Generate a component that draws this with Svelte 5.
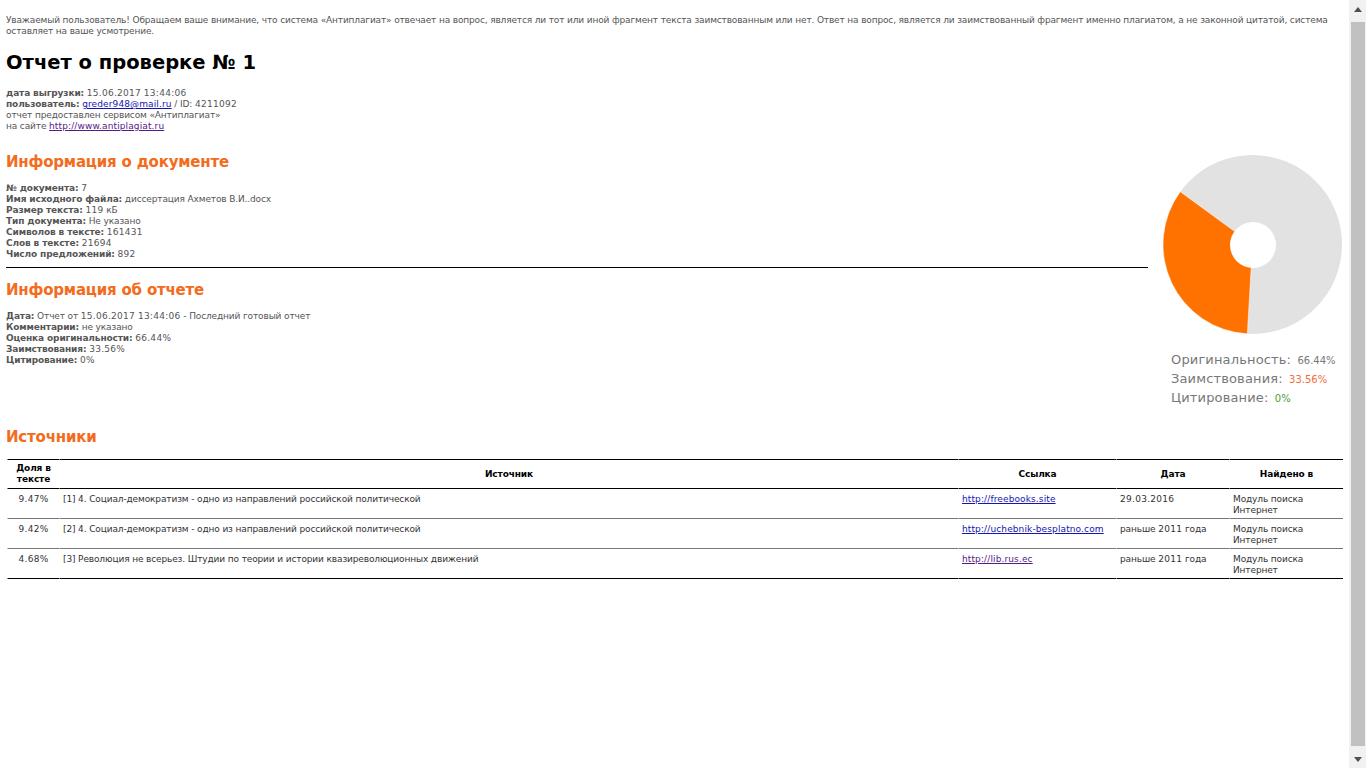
<script>
  const docInfo = [
    ["№ документа:", "7"],
    ["Имя исходного файла:", "диссертация Ахметов В.И..docx"],
    ["Размер текста:", "119 кБ"],
    ["Тип документа:", "Не указано"],
    ["Символов в тексте:", "161431"],
    ["Слов в тексте:", "21694"],
    ["Число предложений:", "892"],
  ];
  const reportInfo = [
    ["Дата:", "Отчет от 15.06.2017 13:44:06 - Последний готовый отчет"],
    ["Комментарии:", "не указано"],
    ["Оценка оригинальности:", "66.44%"],
    ["Заимствования:", "33.56%"],
    ["Цитирование:", "0%"],
  ];
  const sources = [
    { share: "9.47%", title: "[1] 4. Социал-демократизм - одно из направлений российской политической", url: "http://freebooks.site", date: "29.03.2016" },
    { share: "9.42%", title: "[2] 4. Социал-демократизм - одно из направлений российской политической", url: "http://uchebnik-besplatno.com", date: "раньше 2011 года" },
    { share: "4.68%", title: "[3] Революция не всерьез. Штудии по теории и истории квазиреволюционных движений", url: "http://lib.rus.ec", date: "раньше 2011 года", visited: true },
  ];

  // digits sit wider than letters in the report's font
  const runs = (text) => text.split(/(\d[\d.:%]*)/);

  // orange slice, angles measured clockwise from 12 o'clock
  const r = 89.5;
  const point = (deg) => {
    const a = (deg * Math.PI) / 180;
    return `${(r + r * Math.sin(a)).toFixed(2)} ${(r - r * Math.cos(a)).toFixed(2)}`;
  };
  const slice = `M${r} ${r} L${point(183.3)} A${r} ${r} 0 0 1 ${point(306.2)} Z`;
</script>

{#snippet val(text)}{#each runs(text) as part, i}{#if i % 2}<span class="num">{part}</span>{:else}{part}{/if}{/each}{/snippet}

<div class="page">
  <main>
    <p class="notice">Уважаемый пользователь! Обращаем ваше внимание, что система «Антиплагиат» отвечает на вопрос, является ли тот или иной фрагмент текста заимствованным или нет. Ответ на вопрос, является ли заимствованный фрагмент именно плагиатом, а не законной цитатой, система оставляет на ваше усмотрение.</p>
    <h1>Отчет о проверке № 1</h1>
    <div class="meta">
      <div><b>дата выгрузки:</b> {@render val("15.06.2017 13:44:06")}</div>
      <div><b>пользователь:</b> <a href="#top">greder948@mail.ru</a> / ID: {@render val("4211092")}</div>
      <div>отчет предоставлен сервисом «Антиплагиат»</div>
      <div>на сайте <a class="visited" href="#top">http://www.antiplagiat.ru</a></div>
    </div>

    <div class="info">
      <div class="info-text">
        <h2>Информация о документе</h2>
        <div class="rows">
          {#each docInfo as [label, value]}
            <div><b>{label}</b> {@render val(value)}</div>
          {/each}
        </div>
        <hr />
        <h2>Информация об отчете</h2>
        <div class="rows">
          {#each reportInfo as [label, value]}
            <div><b>{label}</b> {@render val(value)}</div>
          {/each}
        </div>
      </div>
      <aside>
        <svg width="180" height="180" viewBox="0 0 180 180">
          <circle cx={r} cy={r} r={r} fill="#e2e2e2" />
          <path d={slice} fill="#ff7200" stroke="#fff" stroke-width="0.5" />
          <circle cx="90" cy="90" r="23" fill="#fff" />
        </svg>
        <div class="legend">
          <div>Оригинальность: <span>66.44%</span></div>
          <div>Заимствования: <span class="borrowed">33.56%</span></div>
          <div>Цитирование: <span class="cited">0%</span></div>
        </div>
      </aside>
    </div>

    <h2 class="sources-title">Источники</h2>
    <table>
      <thead>
        <tr>
          <th class="c-share">Доля в тексте</th>
          <th>Источник</th>
          <th class="c-link">Ссылка</th>
          <th class="c-date">Дата</th>
          <th class="c-found">Найдено в</th>
        </tr>
      </thead>
      <tbody>
        {#each sources as s}
          <tr>
            <td class="share">{@render val(s.share)}</td>
            <td>{s.title}</td>
            <td><a class:visited={s.visited} href="#top">{s.url}</a></td>
            <td>{@render val(s.date)}</td>
            <td>Модуль поиска Интернет</td>
          </tr>
        {/each}
      </tbody>
    </table>
  </main>

  <div class="scrollbar">
    <span class="arrow up"></span>
    <span class="thumb"></span>
    <span class="arrow down"></span>
  </div>
</div>

<style>
  :global(body) {
    background: #fff;
  }

  .page {
    display: flex;
    height: 768px;
    overflow: hidden;
    font: 9px/11px "DejaVu Sans", Verdana, sans-serif;
    letter-spacing: -0.13px;
    color: #555;
  }

  .num {
    letter-spacing: 0.28px;
  }

  main {
    flex: 1;
    min-width: 0;
    padding: 15px 6px 0;
  }

  .notice {
    margin: 0;
    letter-spacing: -0.145px;
  }

  h1 {
    margin: 13px 0 0;
    font-size: 19.5px;
    line-height: 26px;
    letter-spacing: 0;
    color: #000;
  }

  .meta {
    margin-top: 12px;
  }

  a {
    color: #1414b0;
    letter-spacing: 0.12px;
  }

  a.visited {
    color: #551a8b;
  }

  .info {
    display: flex;
    margin-top: 14px;
  }

  .info-text {
    flex: 1;
    padding-top: 7px;
  }

  h2 {
    margin: 0;
    font-size: 15px;
    line-height: 18px;
    letter-spacing: -0.2px;
    color: #f26c1c;
  }

  .rows {
    margin-top: 12px;
  }

  hr {
    height: 1px;
    margin: 7px 0 13px;
    border: 0;
    background: #000;
  }

  aside {
    width: 195px;
    flex: none;
    padding-top: 9px;
    padding-left: 15px;
    box-sizing: border-box;
  }

  svg {
    display: block;
  }

  .legend {
    margin: 15px 0 0 8px;
    font-size: 13px;
    line-height: 19px;
    letter-spacing: 0.15px;
    color: #777;
    white-space: nowrap;
  }

  .legend span {
    margin-left: 2px;
    font-size: 10px;
    line-height: 1;
    letter-spacing: 0;
  }

  .legend .borrowed {
    color: #f26c3c;
  }

  .legend .cited {
    color: #4f9a3a;
  }

  .sources-title {
    margin-top: 21px;
  }

  table {
    width: 1336px;
    margin: 13px 0 0 1px;
    border-collapse: separate;
    border-spacing: 0;
    table-layout: fixed;
    color: #333;
  }

  th {
    height: 28px;
    padding: 0 1px;
    border-top: 1px solid #000;
    border-bottom: 1px solid #000;
    border-left: 1px solid #fff;
    color: #000;
    text-align: center;
    vertical-align: middle;
    font-weight: bold;
  }

  .c-share {
    width: 49px;
  }

  .c-link {
    width: 155px;
  }

  .c-date {
    width: 110px;
  }

  .c-found {
    width: 111px;
  }

  td {
    height: 30px;
    padding: 5px 3px 2px;
    box-sizing: border-box;
    border-bottom: 1px solid #777;
    border-left: 1px solid #fff;
    vertical-align: top;
  }

  td.share {
    text-align: center;
  }

  tr:last-child td {
    border-bottom-color: #000;
  }

  .scrollbar {
    display: flex;
    flex-direction: column;
    align-items: center;
    width: 17px;
    flex: none;
    background: #f1f1f1;
  }

  .thumb {
    flex: 1;
    width: 14px;
    background: #c1c1c1;
    margin: 10px 0 11px;
  }

  .arrow {
    flex: none;
    width: 0;
    height: 0;
    margin-top: 7px;
    border-left: 4px solid transparent;
    border-right: 4px solid transparent;
  }

  .arrow.up {
    border-bottom: 5px solid #505050;
  }

  .arrow.down {
    margin: 0 0 6px;
    border-top: 5px solid #505050;
  }
</style>
